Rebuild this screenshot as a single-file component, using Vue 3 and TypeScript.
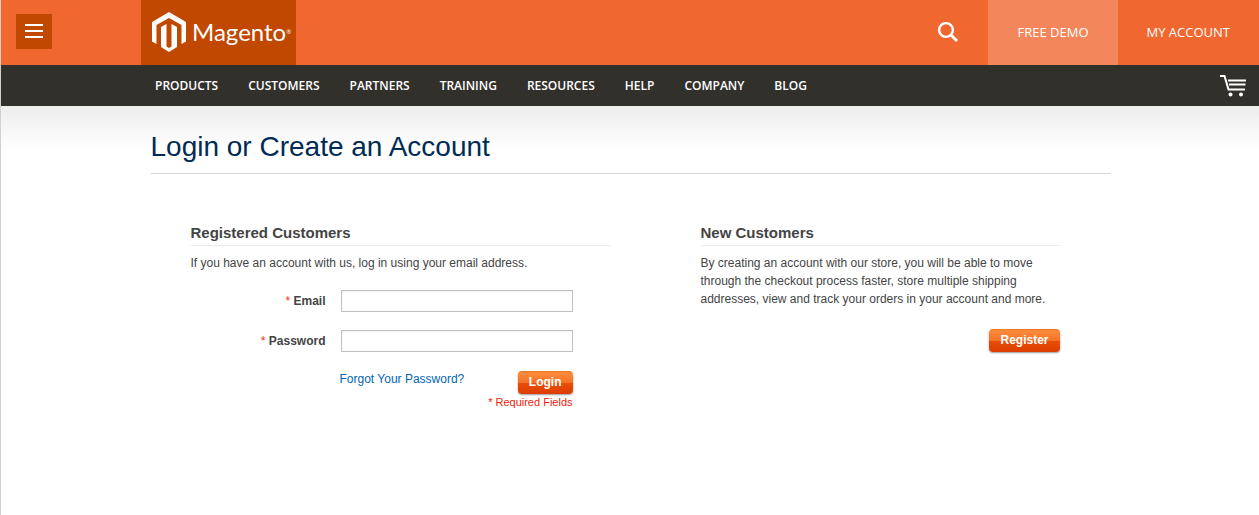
<script setup lang="ts">
import { ref } from 'vue'

const navItems: string[] = [
  'Products',
  'Customers',
  'Partners',
  'Training',
  'Resources',
  'Help',
  'Company',
  'Blog',
]

const email = ref('')
const password = ref('')
</script>

<template>
  <div class="page">
    <header class="topbar">
      <div class="menu-area">
        <button class="menu" type="button" aria-label="Menu">
          <span class="line"></span>
          <span class="line"></span>
          <span class="line"></span>
        </button>
      </div>
      <a class="logo" href="#" aria-label="Magento">
        <svg class="emblem" width="36" height="42" viewBox="0 0 36 42" aria-hidden="true">
          <path
            fill="#fff"
            d="M18 1 35 11V30.500L30.500 33V14L18 7 5.500 14V33L1 30.500V11ZM10 16 15.500 13V35.500L18 37 20.500 35.500V13L26 16V36L18 41 10 36Z"
          />
        </svg>
        <span class="wordmark">Magento</span><span class="mark">®</span>
      </a>
      <button class="search" type="button" aria-label="Search">
        <svg width="22" height="22" viewBox="0 0 22 22" aria-hidden="true">
          <circle cx="9" cy="8" r="6.900" fill="none" stroke="#fff" stroke-width="2.400" />
          <path d="M13.500 12.500 20 19" stroke="#fff" stroke-width="3" />
        </svg>
      </button>
      <a class="action demo" href="#">FREE DEMO</a>
      <a class="action" href="#">MY ACCOUNT</a>
    </header>

    <nav class="nav">
      <a v-for="item in navItems" :key="item" class="nav-link" href="#">{{ item }}</a>
      <a class="cart" href="#" aria-label="Cart">
        <svg width="28" height="24" viewBox="0 0 28 24" aria-hidden="true">
          <path d="M1 2H5.500L9.500 15.500H26" fill="none" stroke="#fff" stroke-width="2" />
          <path d="M9 6.500H27M10 10.500H26.500" stroke="#fff" stroke-width="2" />
          <circle cx="11.500" cy="20.500" r="2" fill="#fff" />
          <circle cx="22" cy="20.500" r="2" fill="#fff" />
        </svg>
      </a>
    </nav>

    <main class="main">
      <div class="container">
        <h1 class="title">Login or Create an Account</h1>
        <div class="columns">
          <section class="registered">
            <h2 class="heading">Registered Customers</h2>
            <p class="copy">If you have an account with us, log in using your email address.</p>
            <form class="form" @submit.prevent>
              <div class="row">
                <label class="label" for="email"><span class="star">*</span> Email</label>
                <input id="email" v-model="email" class="field" type="email" />
              </div>
              <div class="row">
                <label class="label" for="password"><span class="star">*</span> Password</label>
                <input id="password" v-model="password" class="field" type="password" />
              </div>
              <div class="submit">
                <a class="forgot" href="#">Forgot Your Password?</a>
                <button class="button" type="submit">Login</button>
              </div>
              <p class="required">* Required Fields</p>
            </form>
          </section>
          <section class="new">
            <h2 class="heading">New Customers</h2>
            <p class="copy">
              By creating an account with our store, you will be able to move through the checkout
              process faster, store multiple shipping addresses, view and track your orders in your
              account and more.
            </p>
            <div class="register">
              <button class="button" type="button">Register</button>
            </div>
          </section>
        </div>
      </div>
    </main>
  </div>
</template>

<style>
body {
  margin: 0;
  background: #fff;
}
</style>

<style scoped>
.page {
  min-height: 100vh;
  box-sizing: border-box;
  border-left: 1px solid #d4d0c8;
  color: #444;
  font: 12px/18px 'Liberation Sans', Arial, sans-serif;
}

a {
  text-decoration: none;
}

button {
  border: 0;
  padding: 0;
  cursor: pointer;
}

.topbar {
  display: flex;
  align-items: stretch;
  height: 65px;
  background: #f06730;
}

.menu-area {
  width: 140px;
  box-sizing: border-box;
  padding: 14px 15px;
}

.menu {
  display: flex;
  flex-direction: column;
  align-items: center;
  justify-content: center;
  gap: 4px;
  width: 36px;
  height: 35px;
  padding-bottom: 2px;
  background: #c04800;
}

.line {
  width: 18px;
  height: 2px;
  background: #fff;
}

.logo {
  display: flex;
  align-items: center;
  box-sizing: border-box;
  width: 155px;
  padding: 0 0 2px 10px;
  background: #c04800;
  color: #fff;
}

.emblem {
  flex: none;
}

.wordmark {
  margin-left: 5px;
  font: 24px/32px Lato, sans-serif;
}

.mark {
  font: 6px/18px 'Open Sans', sans-serif;
}

.search {
  margin-left: auto;
  width: 80px;
  background: transparent;
}

.search svg {
  display: block;
  margin: 0 auto;
}

.action {
  display: flex;
  align-items: center;
  padding: 0 29px 2px;
  color: #fff;
  font: 13px/18px 'Open Sans', sans-serif;
}

.demo {
  background: #f4865b;
}

.nav {
  display: flex;
  align-items: center;
  gap: 30px;
  height: 41px;
  padding: 0 12px 0 154px;
  background: #32302b;
}

.nav-link {
  color: #fff;
  font: 600 12px/18px 'Open Sans', sans-serif;
  text-transform: uppercase;
}

.cart {
  margin-left: auto;
}

.cart svg {
  display: block;
}

.main {
  padding-left: 1px;
  background: linear-gradient(#ededed, #fff 44px);
}

.container {
  max-width: 960px;
  margin: 0 auto;
  padding-top: 25px;
}

.title {
  margin: 0;
  padding-bottom: 10px;
  border-bottom: 1px solid #d9d9d9;
  color: #002b54;
  font-size: 28px;
  font-weight: 400;
  line-height: 32px;
}

.columns {
  display: flex;
  justify-content: space-between;
  gap: 40px;
  padding: 50px 51px 0 40px;
}

.registered {
  flex: 0 1 420px;
}

.new {
  flex: 0 1 359px;
}

.heading {
  margin: 0 0 8px;
  padding-bottom: 3px;
  border-bottom: 1px solid #ebebeb;
  font-size: 15px;
  line-height: 18px;
}

.copy {
  margin: 0;
}

.form {
  width: 382px;
  margin-top: 18px;
}

.row {
  display: flex;
  align-items: center;
  justify-content: flex-end;
  gap: 15px;
  margin-bottom: 18px;
}

.label {
  font-weight: 700;
}

.star {
  color: #eb340a;
  font-weight: 400;
}

.field {
  box-sizing: border-box;
  width: 232px;
  height: 22px;
  padding: 2px 4px;
  border: 1px solid #c0c0c0;
  background: #fff;
  box-shadow: inset 0 1px 2px #f2f2f2;
  font: inherit;
}

.submit {
  display: flex;
  align-items: center;
  justify-content: space-between;
  height: 25px;
  padding-left: 149px;
}

.forgot {
  padding-bottom: 7px;
  color: #0066b3;
}

.button {
  height: 23px;
  padding: 0 11px 2px;
  border-radius: 4px;
  background: linear-gradient(#e87520, #fb8c3c 2px, #f47228 50%, #e85008 51%, #dc3c00);
  box-shadow: 0 1px 2px #999;
  color: #fff;
  font: 700 12px/18px 'Liberation Sans', Arial, sans-serif;
}

.required {
  margin: 0;
  color: #eb1c0a;
  font-size: 11px;
  line-height: 14px;
  text-align: right;
}

.register {
  display: flex;
  justify-content: flex-end;
  margin-top: 21px;
}
</style>
